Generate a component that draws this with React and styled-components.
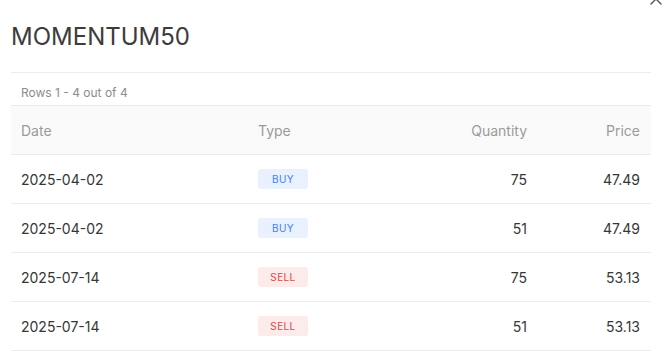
import React from "react";
import styled, { createGlobalStyle } from "styled-components";

const GlobalStyle = createGlobalStyle`
  html, body {
    margin: 0;
    padding: 0;
    background: #ffffff;
    font-family: Inter, "Noto Sans", sans-serif;
    overflow: hidden;
  }
`;

const trades = [
  { date: "2025-04-02", type: "BUY", qty: 75, price: "47.49" },
  { date: "2025-04-02", type: "BUY", qty: 51, price: "47.49" },
  { date: "2025-07-14", type: "SELL", qty: 75, price: "53.13" },
  { date: "2025-07-14", type: "SELL", qty: 51, price: "53.13" },
];

const App = () => {
  return (
    <Modal>
      <GlobalStyle />
      <CloseButton aria-label="close">
        <svg width="12" height="12" viewBox="0 0 12 12">
          <path d="M1 1 L11 11 M11 1 L1 11" stroke="#555" strokeWidth="1.4" strokeLinecap="round" />
        </svg>
      </CloseButton>
      <Header>
        <Title>MOMENTUM50</Title>
      </Header>
      <RowCount>Rows 1 - 4 out of 4</RowCount>
      <Table>
        <HeadRow>
          <HeadCell>Date</HeadCell>
          <HeadCell>Type</HeadCell>
          <HeadCell right>Quantity</HeadCell>
          <HeadCell right last>Price</HeadCell>
        </HeadRow>
        {trades.map((t, i) => (
          <Row key={i}>
            <Cell>{t.date}</Cell>
            <Cell>
              <Badge kind={t.type}>{t.type}</Badge>
            </Cell>
            <Cell right>{t.qty}</Cell>
            <Cell right last>{t.price}</Cell>
          </Row>
        ))}
      </Table>
    </Modal>
  );
};

const Modal = styled.div`
  position: relative;
  width: 640px;
  padding: 0 16px 0 11px;
`;
const CloseButton = styled.button`
  all: unset;
  position: absolute;
  top: -7px;
  right: 5px;
  width: 12px;
  height: 12px;
  display: flex;
`;
const Header = styled.div`
  padding: 22px 0 21px;
  border-bottom: 1px solid #ececec;
`;
const Title = styled.h1`
  margin: 0;
  font-size: 24px;
  line-height: 29px;
  font-weight: 400;
  color: #3c3c3c;
`;
const RowCount = styled.div`
  padding: 12px 10px 5px;
  font-size: 12px;
  line-height: 15px;
  color: #8c8c8c;
`;
const Table = styled.div`
  border-top: 1px solid #ececec;
`;
const HeadRow = styled.div`
  display: grid;
  grid-template-columns: 237px 152px 137px 114px;
  height: 48px;
  align-items: center;
  background: #fafafa;
  border-bottom: 1px solid #ececec;
`;
const Row = styled(HeadRow)`
  background: #ffffff;
`;
const HeadCell = styled.div`
  padding: ${(p) => (p.last ? "0 11px 0 10px" : "0 10px")};
  font-size: 14px;
  color: #9a9a9a;
  text-align: ${(p) => (p.right ? "right" : "left")};
`;
const Cell = styled(HeadCell)`
  color: #363636;
  display: flex;
  justify-content: ${(p) => (p.right ? "flex-end" : "flex-start")};
`;
const Badge = styled.span`
  display: inline-flex;
  align-items: center;
  justify-content: center;
  width: 50px;
  height: 20px;
  border-radius: 3px;
  font-size: 10px;
  letter-spacing: 0.4px;
  background: ${(p) => (p.kind === "BUY" ? "#e9f1fe" : "#fcebea")};
  color: ${(p) => (p.kind === "BUY" ? "#3f82e8" : "#d94a47")};
`;

export default App;
